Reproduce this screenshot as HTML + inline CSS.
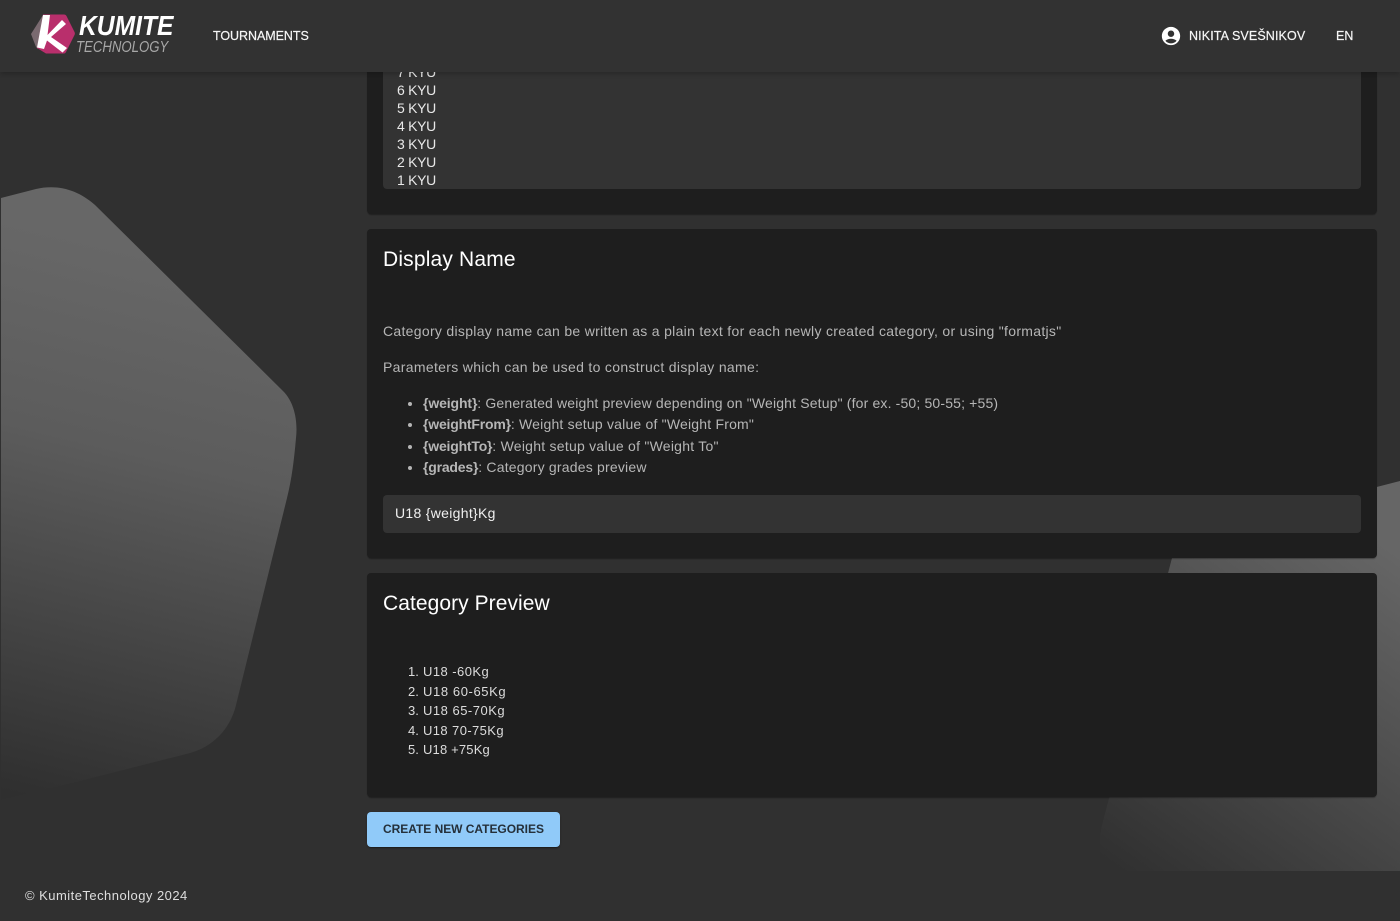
<!DOCTYPE html>
<html lang="en"><head><meta charset="utf-8"><title>Kumite Technology</title>
<style>
html,body{margin:0;padding:0;width:1400px;height:921px;overflow:hidden;background:#303030;font-family:"Liberation Sans",sans-serif}
.bg{position:absolute;left:0;top:0}
.card{position:absolute;left:367px;width:1010px;background:#1e1e1e;border-radius:4px;box-shadow:0 2px 1px -1px rgba(0,0,0,.2),0 1px 1px rgba(0,0,0,.14)}
.box{position:absolute;left:383px;width:978px;background:#333;border-radius:4px}
.t{position:absolute;white-space:nowrap;line-height:20px;height:20px;font-size:14px}
.b{color:#b6b6b6}
.g{color:#e8e8e8;left:397px;letter-spacing:-.3px}
.h{color:#fff;font-size:21px;left:383px;line-height:28px;height:28px}
.o{color:#dcdcdc;font-size:13px}
.l{letter-spacing:.2px}
.l b{font-weight:700;letter-spacing:-.2px}
.d{position:absolute;left:408px;width:4px;height:4px;border-radius:50%;background:#b6b6b6}
header{position:absolute;left:0;top:0;width:1400px;height:72px;background:#323232;box-shadow:0 2px 4px -1px rgba(0,0,0,.12),0 3px 4px rgba(0,0,0,.08)}
.n{color:#f6f6f6;font-size:12.5px;top:26px;-webkit-text-stroke:.2px #f6f6f6}
.btn{position:absolute;left:367px;top:812px;width:193px;height:35px;background:#90caf9;border-radius:4px;box-shadow:0 2px 1px -1px rgba(0,0,0,.3),0 1px 2px rgba(0,0,0,.2)}
</style></head><body>
<svg class="bg" width="1400" height="871" viewBox="0 0 1400 871">
<defs>
<linearGradient id="a" gradientUnits="userSpaceOnUse" x1="170" y1="260" x2="40" y2="800"><stop offset="0" stop-color="#676767"/><stop offset=".35" stop-color="#5c5c5c"/><stop offset="1" stop-color="#2f2f2f"/></linearGradient>
<linearGradient id="b" gradientUnits="userSpaceOnUse" x1="1350" y1="520" x2="1110" y2="865"><stop offset="0" stop-color="#666"/><stop offset="1" stop-color="#303030"/></linearGradient>
</defs>
<path d="M1 198L36 189C58 184 78 190 95 205L283 391C294 402 298 420 296 438C294 460 292 478 287 498L236 705C230 730 212 747 190 753L60 786L1 800Z" fill="url(#a)"/>
<path d="M1400 481L1210 530C1190 535 1177 545 1172 558L1102 825C1098 842 1100 860 1104 871H1400Z" fill="url(#b)"/>
</svg>

<div class="card" style="top:60px;height:154px"></div>
<div class="box" style="top:60px;height:129px"></div>
<div class="t g" style="top:62px">7 KYU</div>
<div class="t g" style="top:80px">6 KYU</div>
<div class="t g" style="top:98px">5 KYU</div>
<div class="t g" style="top:116px">4 KYU</div>
<div class="t g" style="top:134px">3 KYU</div>
<div class="t g" style="top:152px">2 KYU</div>
<div class="t g" style="top:170px">1 KYU</div>

<div class="card" style="top:229px;height:329px"></div>
<div class="t h" style="top:246px;letter-spacing:.17px">Display Name</div>
<div class="t b" style="left:383px;top:321px;letter-spacing:.3px">Category display name can be written as a plain text for each newly created category, or using "formatjs"</div>
<div class="t b" style="left:383px;top:357px;letter-spacing:.32px">Parameters which can be used to construct display name:</div>
<div class="d" style="top:402px"></div>
<div class="t b l" style="left:423px;top:393px;letter-spacing:.16px"><b style="letter-spacing:-.12px">{weight}</b>: Generated weight preview depending on "Weight Setup" (for ex. -50; 50-55; +55)</div>
<div class="d" style="top:423px"></div>
<div class="t b l" style="left:423px;top:414px"><b>{weightFrom}</b>: Weight setup value of "Weight From"</div>
<div class="d" style="top:445px"></div>
<div class="t b l" style="left:423px;top:436px;letter-spacing:.25px"><b>{weightTo}</b>: Weight setup value of "Weight To"</div>
<div class="d" style="top:466px"></div>
<div class="t b l" style="left:423px;top:457px"><b>{grades}</b>: Category grades preview</div>
<div class="box" style="top:495px;height:38px"></div>
<div class="t" style="left:395px;top:503px;color:#f0f0f0;letter-spacing:.3px">U18 {weight}Kg</div>

<div class="card" style="top:573px;height:224px"></div>
<div class="t h" style="top:590px;letter-spacing:.06px">Category Preview</div>
<div class="t o" style="left:408px;top:662px">1.</div><div class="t o" style="left:423px;top:662px;letter-spacing:.45px">U18 -60Kg</div>
<div class="t o" style="left:408px;top:682px">2.</div><div class="t o" style="left:423px;top:682px;letter-spacing:.6px">U18 60-65Kg</div>
<div class="t o" style="left:408px;top:701px">3.</div><div class="t o" style="left:423px;top:701px;letter-spacing:.5px">U18 65-70Kg</div>
<div class="t o" style="left:408px;top:721px">4.</div><div class="t o" style="left:423px;top:721px;letter-spacing:.4px">U18 70-75Kg</div>
<div class="t o" style="left:408px;top:740px">5.</div><div class="t o" style="left:423px;top:740px;letter-spacing:.17px">U18 +75Kg</div>

<div class="btn"></div>
<div class="t" style="left:383px;top:819px;font-size:12px;font-weight:700;letter-spacing:-.03px;color:#25303a">CREATE NEW CATEGORIES</div>

<div class="t" style="left:25px;top:886px;font-size:13px;letter-spacing:.47px;color:#dedede">© KumiteTechnology 2024</div>

<header>
<svg style="position:absolute;left:0;top:0" width="100" height="72" viewBox="0 0 100 72">
<path d="M31 34L43 15L38 49L36 47Z" fill="#7a6a70"/>
<path d="M43 14.500H64C65 14.500 66 15 66.500 16L74.500 32C75 33 75 34 74.500 35L66 52C65.500 53 65 53.500 64 53.500H46L37 48Z" fill="#b92f6c"/>
<path d="M43 15H50L47.500 35L62 20L66 24L51 37L67 48L62.500 52.500L47 40.500L44 49L37 47.500Z" fill="#fff"/>
</svg>
<div class="t" style="left:79px;top:11px;font-size:28px;line-height:30px;height:30px;font-weight:700;font-style:italic;color:#fff;transform:scaleX(.88);transform-origin:0 50%">KUMITE</div>
<div class="t" style="left:76px;top:38px;font-size:15.5px;font-style:italic;color:#a8a8a8;transform:scaleX(.85);transform-origin:0 50%">TECHNOLOGY</div>
<div class="t n" style="left:213px;letter-spacing:-.05px">TOURNAMENTS</div>
<svg style="position:absolute;left:1160px;top:25px" width="22" height="22" viewBox="0 0 24 24"><path fill="#fff" d="M12 2C6.48 2 2 6.48 2 12s4.48 10 10 10 10-4.48 10-10S17.52 2 12 2zm0 4c1.93 0 3.5 1.57 3.5 3.5S13.93 13 12 13s-3.5-1.57-3.5-3.5S10.07 6 12 6zm0 14c-2.03 0-4.43-.82-6.14-2.88C7.55 15.8 9.68 15 12 15s4.45.8 6.14 2.12C16.43 19.18 14.03 20 12 20z"/></svg>
<div class="t n" style="left:1189px;letter-spacing:.12px">NIKITA SVEŠNIKOV</div>
<div class="t n" style="left:1336px;letter-spacing:.1px">EN</div>
</header>
</body></html>
